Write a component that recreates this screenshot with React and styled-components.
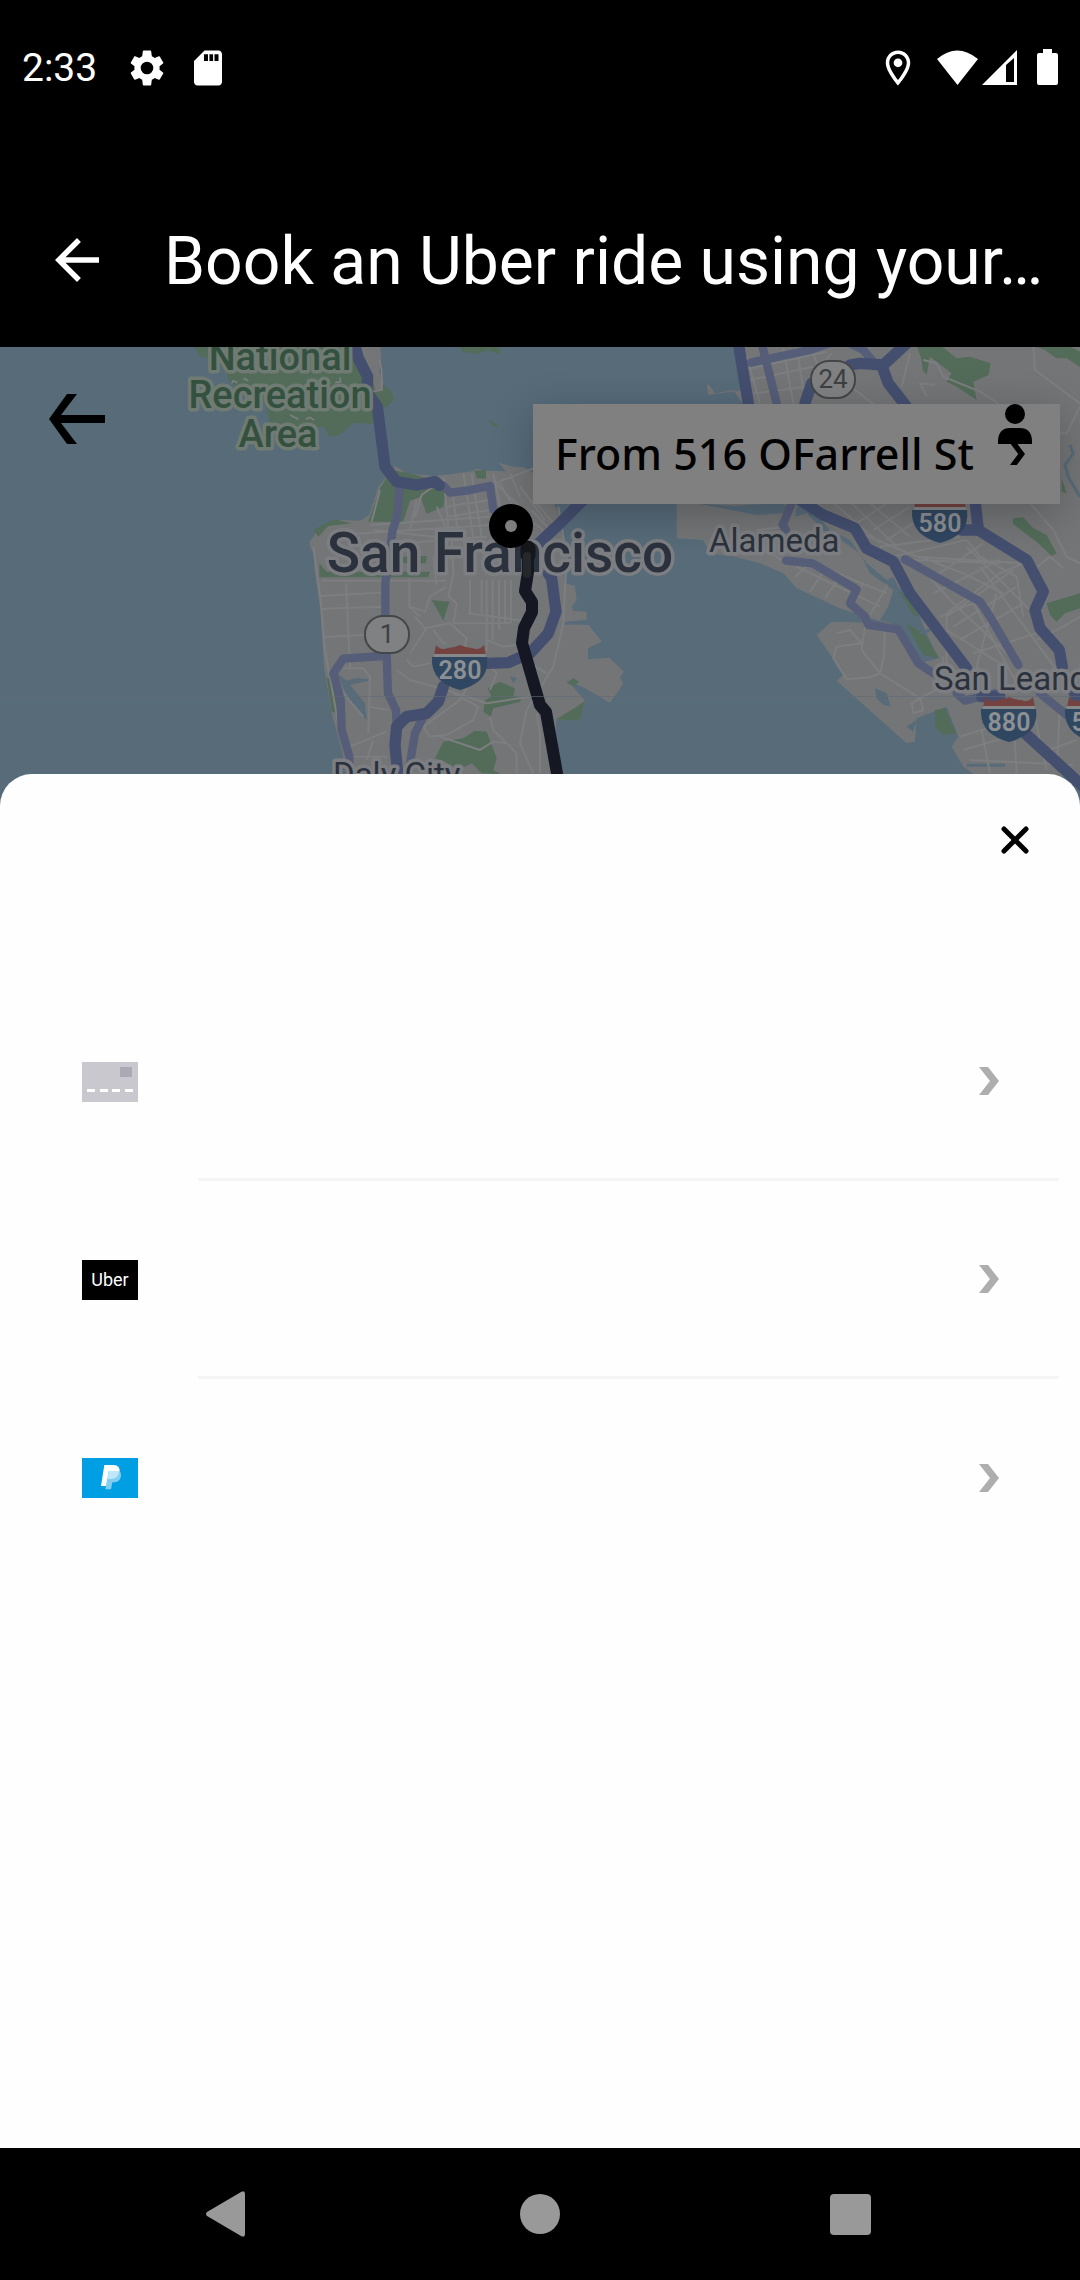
import React from "react";
import styled, { createGlobalStyle } from "styled-components";

const GlobalStyle = createGlobalStyle`
  *, *::before, *::after { box-sizing: border-box; }
  body { margin: 0; background: #000; font-family: Roboto, "Liberation Sans", sans-serif; }
  button { margin: 0; padding: 0; border: 0; background: none; color: inherit; font: inherit; cursor: pointer; }
  svg { display: block; }
`;

const Screen = styled.div`
  display: flex;
  flex-direction: column;
  min-height: 100vh;
  background: #000;
`;

const StatusBar = styled.header`
  display: flex;
  align-items: center;
  justify-content: space-between;
  height: 136px;
  padding: 0 17px 0 22px;
  color: #fff;
`;

const StatusGroup = styled.div`
  display: flex;
  align-items: center;
  gap: ${(p) => p.$gap}px;
`;

const Clock = styled.time`
  margin-right: 10px;
  font-size: 39px;
  line-height: 44px;
`;

const AppBar = styled.div`
  display: flex;
  align-items: center;
  gap: 54px;
  height: 175px;
  margin-top: 36px;
  padding: 0 36px 0 44px;
  color: #fff;
`;

const IconButton = styled.button`
  display: grid;
  flex: none;
  place-items: center;
`;

const Title = styled.h1`
  margin: 0;
  padding-top: 4px;
  font-size: 66px;
  font-weight: 400;
  line-height: 78px;
  white-space: nowrap;
`;

const MapArea = styled.section`
  display: grid;
  height: 460px;
  background: #576b79;
  overflow: hidden;

  > * { grid-area: 1 / 1; }
`;

const MapDrawing = styled.svg`
  width: 100%;
  height: 460px;
`;

const MapControls = styled.div`
  position: relative;
  display: flex;
  align-items: flex-start;
  justify-content: space-between;
  padding: 47px 20px 0 49px;
`;

const AddressButton = styled.button`
  display: flex;
  align-items: center;
  justify-content: space-between;
  width: 527px;
  height: 100px;
  margin-top: 10px;
  padding: 0 35px 0 22px;
  background: #808080;
  box-shadow: 0 10px 44px rgba(0, 0, 0, 0.24);
  color: #000;
  font-family: "Noto Sans", Roboto, sans-serif;
  font-size: 43px;
  font-weight: 500;
  line-height: 56px;
  white-space: nowrap;
`;

const ProfileButton = styled(IconButton)`
  position: absolute;
  top: 56px;
  right: 48px;
`;

const Sheet = styled.main`
  position: relative;
  flex: 1;
  margin-top: -33px;
  border-radius: 32px 32px 0 0;
  background: #fefefe;
`;

const SheetHeader = styled.div`
  display: flex;
  align-items: flex-start;
  justify-content: flex-end;
  height: 209px;
  padding: 48px 47px 0 0;
`;

const MethodList = styled.ul`
  margin: 0;
  padding: 0;
  list-style: none;
`;

const Method = styled.button`
  display: grid;
  grid-template-columns: 56px 1fr;
  column-gap: 60px;
  align-items: center;
  width: 100%;
  height: 198px;
  padding: 0 21px 0 82px;
`;

const MethodBody = styled.span`
  display: flex;
  align-items: center;
  justify-content: flex-end;
  height: 100%;
  padding-right: 60px;
  border-bottom: ${(p) => (p.$last ? "0" : "3px solid #f5f5f5")};
`;

const UberBadge = styled.span`
  display: grid;
  place-items: center;
  width: 56px;
  height: 40px;
  background: #000;
  color: #fff;
  font-family: Roboto, sans-serif;
  font-size: 18px;
  line-height: 20px;
`;

const NavBar = styled.nav`
  display: grid;
  grid-template-columns: repeat(3, 312px);
  justify-content: center;
  height: 132px;
  color: #999;
`;

function Glyph({ size = 42, children }) {
  return (
    <svg width={size} height={size} viewBox="0 0 24 24" fill="currentColor" aria-hidden="true">
      {children}
    </svg>
  );
}

function Chevron({ color, width = 20, height = 28 }) {
  return (
    <svg width={width} height={height} viewBox="0 0 20 28" preserveAspectRatio="none" fill={color} aria-hidden="true">
      <path d="M0 0H9L20 14L9 28H0L11 14Z" />
    </svg>
  );
}

function CardIcon() {
  return (
    <svg width="56" height="40" viewBox="0 0 56 40" aria-hidden="true">
      <path fill="#c9c8ce" d="M0 0H56V40H0Z" />
      <path fill="#aaaab4" d="M38 5H50V15H38Z" />
      <path stroke="#fff" strokeWidth="3" d="M5 28.5H13M18 28.5H26M30 28.5H38M43 28.5H51" />
    </svg>
  );
}

function PayPalIcon() {
  return (
    <svg width="56" height="40" viewBox="0 0 168 120" aria-hidden="true">
      <path fill="#009ee3" d="M0 0H168V120H0Z" />
      <path fill="#fff" d="M67 21H95Q114 22 113 40Q110 62 88 63H78L73 84H57Z" />
      <path fill="#80cff1" d="M80 39H112Q118 43 117 54Q114 72 98 73H91L87 94H70Z" />
      <path fill="#bfe7f8" d="M80 39H112Q109 62 88 63H77Z" />
    </svg>
  );
}

function Interstate({ x, y, label }) {
  return (
    <g transform={`translate(${x} ${y})`}>
      <path fill="#744340" d="M-26 -12L-24 -22Q-19 -16 -12 -19Q-6 -19 0 -22Q6 -19 12 -19Q19 -16 24 -22L26 -12Z" />
      <path fill="#868789" d="M-26 -13H26V-10H-26Z" />
      <path fill="#304762" d="M-28 -10H27Q29 4 20 13Q12 20 0 23Q-12 20 -20 13Q-29 4 -28 -10Z" />
      <text y="12" textAnchor="middle" fill="#8d9093" fontSize="25" fontWeight="600">{label}</text>
    </g>
  );
}

function StateRoute({ x, y, label }) {
  return (
    <g transform={`translate(${x} ${y})`}>
      <rect x="-22" y="-18" width="44" height="37" rx="18" fill="#808182" stroke="#454647" strokeWidth="2" />
      <text y="9" textAnchor="middle" fill="#3d3f42" fontSize="26">{label}</text>
    </g>
  );
}

const halo = {
  stroke: "#7c7e82",
  strokeWidth: 7,
  strokeLinejoin: "round",
  paintOrder: "stroke",
};

function BayMap() {
  return (
    <MapDrawing viewBox="0 347 1080 460" preserveAspectRatio="xMidYMid slice" role="img" aria-label="Map of San Francisco Bay">
      <path fill="#576b79" d="M-900 0H1980V900H-900Z" />

      {/* San Francisco peninsula and the Marin headlands */}
      <g transform="translate(300 340) scale(.3333)" fill="none" strokeLinejoin="round">
        <path fill="#526c59" d="M-330 0L-300 50L-255 70L-210 125L-180 160L-105 190L-95 250L-60 262L75 262L85 290L120 285L145 262L165 248L218 252L225 205L262 200L282 180L275 155L250 135L235 100L205 0Z" />
        <path fill="#576b79" d="M-340 40L-255 60L-220 95L-215 130L-170 165L-105 190L-92 240V300H-340Z" />
        <path fill="#747577" d="M170 0H240L244 60L238 95L250 120L248 152L226 150L215 110L200 70Z" />
        <path fill="#526c59" d="M460 0H590L602 45L565 30L530 42L490 35Z" />
        <path fill="#526c59" d="M566 238L592 255L595 262L574 255Z" />
        <path stroke="#7d7e80" strokeWidth="5" d="M-205 130L-200 122L-188 128M-170 115L-155 122M-30 225L-5 238M18 238L30 232L42 240M105 128L122 125L120 112M238 60L245 90L246 150L218 155" />
        <path fill="#747577" d="M32 625L28 605L50 575L82 548L130 540L180 542L208 525L235 440L268 400L285 378L320 400L400 408L455 402L515 394L530 386L560 392L618 394L596 368L640 380L672 382L705 402L760 490L788 540L780 570L800 620L790 700L797 730L825 738L830 780L815 800L820 812L860 815V840L798 845V853L866 855L906 905L864 925V958L928 953L972 995L960 1010L970 1032L930 1088L890 1065L855 1045L800 1020L815 1035L855 1082L835 1142L770 1138L765 1200L790 1300V1400H150L128 1240L95 1120L72 980L60 800L45 700L40 640Z" />
        <path fill="#576b79" d="M112 1000L140 1022L170 1014L205 1018V1022L150 1035L195 1090L200 1140L165 1105L130 1045ZM788 848L860 840V850L790 854ZM630 1008L650 1015L640 1030Z" />
        <path fill="#526c59" d="M205 545L240 445L275 390L330 400L380 415L438 450L430 500L380 522L362 470L330 482L310 545ZM524 392L558 390V416L530 415ZM40 570L100 538L155 550L85 558L55 590ZM58 670L80 695H390L385 712H58ZM308 650L380 648L378 670H308ZM395 780L448 785L430 842L415 815ZM80 1012L105 1025L122 1122L95 1115ZM563 1045L600 1025L645 1045L640 1070L665 1070L660 1085L580 1105L572 1130L550 1115L555 1080L575 1070ZM800 1028L820 1015L838 1025L820 1038ZM830 1100L855 1082L838 1142L768 1138ZM405 1255L430 1205L490 1195L525 1172L560 1175L590 1255L580 1290L600 1302L545 1300L515 1270L475 1290L435 1265Z" />
        <g stroke="#7d7e80" strokeWidth="6">
          <path d="M40 620L62 780L75 930L120 1180L150 1300M62 768L260 757M65 806L255 800M75 890L195 885M138 730L150 985M65 722H440M328 715V800L360 830M240 450L215 545M350 480L330 570M345 530L365 465L400 440M410 500L440 570L500 610M430 410L445 560M455 440L475 590M490 400L520 590M515 400L545 590M580 400L600 500M585 430L700 385M585 430L690 530M600 430L650 520M630 400L660 470M660 440L735 540M440 500L570 480M440 530L570 510M210 555L570 530M110 585L570 555M180 620L560 590M220 570L580 610M400 650L410 735M455 590L460 700L445 770L470 790L460 850M510 720V820M545 720V820M560 720V930M578 720V900M597 720V870M615 720V850M633 720V850M505 820L690 845M460 850L630 850M330 800L375 815L390 770L440 740M345 830L375 865L450 850M330 940L380 865M400 870L430 910H440M450 850L500 895L490 940M560 900L610 920L650 915" />
          <path d="M775 500L800 650L790 850L760 980L680 1110L660 1210L700 1300M560 930L480 1080L370 1160L390 1190L440 1185L520 1140L535 1100L460 1060M290 990L330 1020L440 1050L560 1090L720 1065M320 960L340 980L390 970M520 930L590 1000L570 1050M570 1130L580 1170L650 1240V1300M710 1120L720 1180V1300M130 985L190 985L210 1010L205 1180M205 1100L265 1110M130 1060L190 1130M150 1220L260 1175M200 1260L220 1200M150 1250L260 1250M420 1190L540 1230L580 1205L620 1210M690 970L740 1000M695 510L750 570M710 490L760 550M680 530L740 580" />
        </g>
        <g strokeLinecap="round">
          <path stroke="#555d78" strokeWidth="25" d="M299 445L292 530L278 570L256 730V830L264 1060L288 1110L290 1160M430 437L450 458L500 452L570 438L580 510M250 948L130 956L100 1000L122 1080L125 1170L148 1250L150 1300M370 1130L345 1180L325 1300" />
          <path stroke="#444f70" strokeWidth="34" d="M160 0L175 55L203 110L200 155L232 200L255 380L290 425L350 435L405 425L418 436M430 1040L415 1085L380 1120L320 1130L290 1160L285 1215L294 1310M560 970L625 968L690 940L745 880L768 815L755 715L745 700M700 625L780 550L850 480" />
        </g>
      </g>

      {/* East bay: Oakland, Alameda and San Leandro */}
      <g transform="translate(680 340) scale(.3333)" fill="none" strokeLinejoin="round">
        <path fill="#747577" d="M145 -30L175 80L190 150L85 165L80 130L92 140L105 160L160 150L195 200L-10 480L-10 595L70 600L90 640L165 650L240 670L310 700L350 745L480 805L555 830L590 840L620 850L455 845L410 885L455 950L490 1005L470 1022L680 1210L705 1205L710 1135L800 1100L835 1190L815 1220L850 1280L890 1310H1800V-30Z" />
        <path fill="#576b79" d="M50 490L160 498L300 488L330 500L310 520L230 525ZM345 530L380 520L440 580L470 590L540 640L570 700L640 750L625 800L600 840L660 860L720 970L775 955L735 870L700 780L655 740L640 710L620 720L560 670L510 600L450 570L380 490L350 500ZM585 1045L620 1060L632 1100L610 1095L590 1075ZM680 1160L710 1140L700 1175Z" />
        <path fill="#747577" d="M320 570L460 620L520 680L625 735L622 790L580 825L500 800L345 735Z" />
        <path fill="#526c59" d="M710 15H780L830 55L870 50L932 70L925 105L880 125L890 180L830 140L800 125L815 100L750 50L740 105L728 90L725 60ZM1045 10H1150L1200 35V80L1160 55L1130 55L1095 30ZM1000 535L1030 532L1060 565L1100 585L1130 640L1115 648L1070 605L1035 580L998 550ZM1100 790L1150 775L1200 760V805L1155 820L1130 845L1110 825ZM1145 415L1160 460L1145 455ZM765 1110L795 1105L828 1180L790 1185L765 1160ZM680 850L735 885L778 955L730 945L700 890ZM655 750L690 780L715 830L700 825Z" />
        <path stroke="#576b79" strokeWidth="9" d="M1170 315L1180 340L1155 375L1165 410L1200 470M720 880L750 870M860 1276H975" />
        <g stroke="#7d7e80" strokeWidth="6">
          <path d="M190 90L440 35M210 120L400 80M220 160L380 140M310 25L340 190M350 20L370 150M395 25L410 70M455 40L430 70M200 50L240 190M540 60L500 130L590 200M690 40L665 140M740 170L720 130L765 135M730 60L770 70L790 110L900 155L955 190M1060 20L1065 90L1200 190M1110 200L1140 280H1160L1200 200" />
          <path d="M410 490L520 570L710 650L1030 670L960 700L800 820V1000M450 480L600 610M510 485L650 620M570 490L690 590M530 550L620 490M580 570L690 500M620 600L730 530M600 620L840 590M640 650L860 600L900 650L1010 710L1030 830M700 660L960 670M720 650L850 700L970 760M750 720L910 610M760 760L960 660M800 830L1000 690M820 860L1010 740M840 900L1030 790M880 940L1070 880M780 830L880 790L1010 1030M800 870L960 970M740 700L810 780L980 940M860 620L1080 840M900 680L1130 990M1050 490L1120 570L1160 650L1200 670M1060 690L1110 650L1150 685M1070 900L1150 860L1200 830M790 950L780 1030M950 760L890 980" />
          <path d="M345 710L390 670M390 755L430 695M435 775L480 710M500 800L550 730M570 825L620 740M350 680L600 800M400 670L620 760M230 570L320 560M240 620L305 660M470 880L510 870L545 910L470 920L460 955L500 1018L570 1012L600 1000L545 930L555 860M615 850L612 950L600 1000L680 1050L720 1075L730 1110L700 1120L695 1090L740 1065L900 980M840 1190L1000 1140M850 1230L1020 1180M870 1260L1180 1275M905 1170L930 1300M1000 1120L1010 1300M1060 1110L1100 1290M1140 1100L1130 1290M1190 1200L1080 1240" />
        </g>
        <g strokeLinecap="round">
          <path stroke="#555d78" strokeWidth="25" d="M212 68L390 30L460 5M240 -10L290 190M490 0L550 30L580 65M335 490L308 555L318 570M318 662L398 670L530 748L510 790L555 830L565 855L655 868L715 970L760 1000M675 658L900 785L930 830L1015 975M830 1060L855 1082L945 1060M1080 1060L1160 1125" />
          <path stroke="#444f70" strokeWidth="34" d="M170 -20L205 190M375 190L395 130M510 75L540 70L610 75L680 10M605 75L625 130L680 200M360 480L430 525L525 565L560 625L640 665L690 760L860 985M845 570H895L885 480M895 570L1040 660L1090 755L1065 810L1080 865L1138 930L1147 980M1035 1180L1210 1340M905 1070L960 1070M1180 1050L1200 1110" />
        </g>
      </g>

      <StateRoute x={387} y={634} label="1" />
      <StateRoute x={833} y={379} label="24" />
      <Interstate x={460} y={667} label="280" />
      <Interstate x={940} y={520} label="580" />
      <Interstate x={1009} y={719} label="880" />
      <Interstate x={1093} y={719} label="580" />

      <g fill="#34513f" fontSize="38" fontWeight="500" textAnchor="middle" {...halo} stroke="#707b73">
        <text x="280" y="370">National</text>
        <text x="280" y="408">Recreation</text>
        <text x="278" y="447">Area</text>
      </g>
      <g fill="#2b323d" {...halo}>
        <text x="500" y="572" fontSize="55" fontWeight="500" textAnchor="middle">San Francisco</text>
        <text x="709" y="552" fontSize="33">Alameda</text>
        <text x="934" y="690" fontSize="33">San Leandro</text>
        <text x="333" y="786" fontSize="33">Daly City</text>
      </g>

      <g fill="none" strokeLinejoin="round" strokeLinecap="round">
        <path stroke="#151823" strokeWidth="12" d="M528 551V572L525 591L532 602L532 612L524 628L522 643L540 705L546 712L560 790" />
        <path stroke="#15171b" strokeWidth="15" d="M528 548V555" />
        <path stroke="#25282b" strokeWidth="8" d="M527 556V574" />
      </g>
      <circle cx="511" cy="526" r="22" />
      <circle cx="511" cy="526" r="6" fill="#808080" />
      <path stroke="#606b75" strokeWidth="1" d="M0 696.5H1080" opacity=".6" />
    </MapDrawing>
  );
}

const methods = [
  { label: "Credit or debit card", icon: <CardIcon /> },
  { label: "Gift card", icon: <UberBadge>Uber</UberBadge> },
  { label: "PayPal", icon: <PayPalIcon /> },
];

export default function App() {
  return (
    <>
      <GlobalStyle />
      <Screen>
        <StatusBar>
          <StatusGroup $gap={19}>
            <Clock>2:33</Clock>
            <Glyph>
              <path d="M19.14 12.94c.04-.3.06-.61.06-.94 0-.32-.02-.64-.07-.94l2.03-1.58a.49.49 0 0 0 .12-.61l-1.92-3.32a.488.488 0 0 0-.59-.22l-2.39.96c-.5-.38-1.03-.7-1.62-.94L14.4 2.5a.484.484 0 0 0-.48-.5h-3.84c-.24 0-.43.17-.47.41l-.36 2.94c-.59.24-1.13.57-1.62.94l-2.39-.96c-.22-.08-.47 0-.59.22L2.74 8.87c-.12.21-.08.47.12.61l2.03 1.58c-.05.3-.09.63-.09.94s.02.64.07.94l-2.03 1.58a.49.49 0 0 0-.12.61l1.92 3.32c.12.22.37.29.59.22l2.39-.96c.5.38 1.03.7 1.62.94l.36 2.94c.05.24.24.41.48.41h3.84c.24 0 .44-.17.47-.41l.36-2.94c.59-.24 1.13-.56 1.62-.94l2.39.96c.22.08.47 0 .59-.22l1.92-3.32a.49.49 0 0 0-.12-.61l-2.01-1.58zM12 15.6A3.6 3.6 0 1 1 12 8.4a3.6 3.6 0 0 1 0 7.2z" />
            </Glyph>
            <Glyph>
              <path fillRule="evenodd" d="M18 2h-8L4 8v12c0 1.1.9 2 2 2h12c1.100 0 2-.9 2-2V4c0-1.100-.9-2-2-2zM9.700 4.200H12V8H9.700zM12.800 4.200H14.900V8H12.800zM15.700 4.200H18V8H15.700z" />
            </Glyph>
          </StatusGroup>
          <StatusGroup $gap={0}>
            <Glyph>
              <path d="M12 2C8.130 2 5 5.130 5 9c0 5.250 7 13 7 13s7-7.750 7-13c0-3.870-3.130-7-7-7zM7 9c0-2.760 2.240-5 5-5s5 2.240 5 5c0 2.880-2.880 7.190-5 9.880C9.920 16.210 7 11.850 7 9z" />
              <circle cx="12" cy="9" r="2.500" />
            </Glyph>
            <svg width="144" height="42" viewBox="0 0 144 42" fill="#fff" aria-hidden="true">
              <path d="M18 12Q38 -5 59 12L38.500 38Z" />
              <path fillRule="evenodd" d="M98 3V38H63ZM87 18V35H95V11Z" />
              <path d="M124 2H133V6H137Q139 6 139 8V36Q139 38 137 38H120Q118 38 118 36V8Q118 6 120 6H124Z" />
            </svg>
          </StatusGroup>
        </StatusBar>

        <AppBar>
          <IconButton type="button" aria-label="Back">
            <Glyph size={66}>
              <path d="M20 11H7.830l5.590-5.590L12 4l-8 8 8 8 1.410-1.410L7.830 13H20v-2z" />
            </Glyph>
          </IconButton>
          <Title>Book an Uber ride using your…</Title>
        </AppBar>

        <MapArea>
          <BayMap />
          <MapControls>
            <IconButton type="button" aria-label="Previous">
              <svg width="56" height="50" viewBox="0 0 56 50" aria-hidden="true">
                <path d="M0 25L18 0H28L12 21H56V29H12L28 50H18Z" />
              </svg>
            </IconButton>
            <AddressButton type="button">
              From 516 OFarrell St
              <Chevron color="#000" width={15} height={22} />
            </AddressButton>
            <ProfileButton type="button" aria-label="Profile">
              <svg width="34" height="41" viewBox="0 0 34 41" aria-hidden="true">
                <circle cx="17" cy="11" r="10" />
                <path d="M0 41V37Q1 25 12 25H22Q33 25 34 37V41Z" />
              </svg>
            </ProfileButton>
          </MapControls>
        </MapArea>

        <Sheet>
          <SheetHeader>
            <IconButton type="button" aria-label="Close">
              <svg width="36" height="36" viewBox="0 0 36 36" fill="none" stroke="#000" strokeWidth="5" strokeLinecap="round" aria-hidden="true">
                <path d="M7 7L29 29M29 7L7 29" />
              </svg>
            </IconButton>
          </SheetHeader>
          <MethodList>
            {methods.map((method, index) => (
              <li key={method.label}>
                <Method type="button" aria-label={method.label}>
                  {method.icon}
                  <MethodBody $last={index === methods.length - 1}>
                    <Chevron color="#aeaeae" />
                  </MethodBody>
                </Method>
              </li>
            ))}
          </MethodList>
        </Sheet>

        <NavBar>
          <IconButton type="button" aria-label="Back">
            <svg width="48" height="48" viewBox="0 0 48 48" fill="currentColor" aria-hidden="true">
              <path d="M3 22L37 2Q41 0 41 4V44Q41 48 37 46L3 26Q1 24 3 22Z" />
            </svg>
          </IconButton>
          <IconButton type="button" aria-label="Home">
            <svg width="48" height="48" viewBox="0 0 48 48" fill="currentColor" aria-hidden="true">
              <circle cx="24" cy="24" r="20" />
            </svg>
          </IconButton>
          <IconButton type="button" aria-label="Recent apps">
            <svg width="48" height="48" viewBox="0 0 48 48" fill="currentColor" aria-hidden="true">
              <rect x="2" y="4" width="41" height="41" rx="4" />
            </svg>
          </IconButton>
        </NavBar>
      </Screen>
    </>
  );
}
